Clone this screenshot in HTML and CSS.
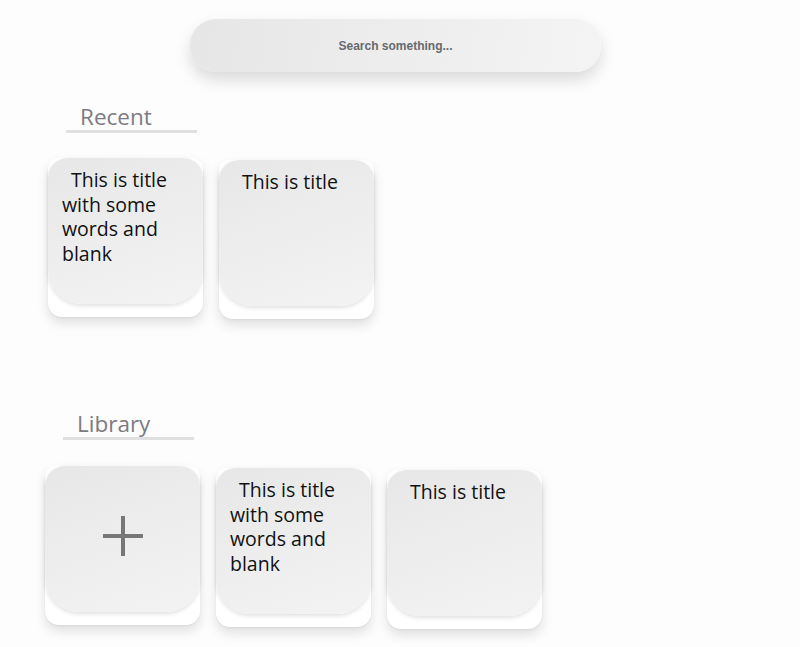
FILE: index.html
```html
<!DOCTYPE html>
<html lang="en">
<head>
<meta charset="utf-8">
<title>Notes</title>
<link rel="stylesheet" href="styles.css">
</head>
<body>
  <header class="top">
    <div class="search">Search something...</div>
  </header>

  <section class="shelf shelf-recent">
    <h2 class="shelf-title">Recent</h2>
    <div class="cards">
      <div class="card"><div class="card-face"><p class="card-text">This is title with some words and blank</p></div></div>
      <div class="card"><div class="card-face"><p class="card-text">This is title</p></div></div>
    </div>
  </section>

  <section class="shelf shelf-library">
    <h2 class="shelf-title">Library</h2>
    <div class="cards">
      <div class="card card-add">
        <div class="card-face">
          <svg class="plus" width="44" height="44" viewBox="0 0 44 44" aria-hidden="true">
            <path d="M22 2v40M2 22h40" stroke="#777" stroke-width="4" fill="none"/>
          </svg>
        </div>
      </div>
      <div class="card"><div class="card-face"><p class="card-text">This is title with some words and blank</p></div></div>
      <div class="card"><div class="card-face"><p class="card-text">This is title</p></div></div>
    </div>
  </section>
</body>
</html>
```

FILE: styles.css
```css
* { box-sizing: border-box; }

html, body {
  margin: 0;
  background: #fdfdfd;
}

body {
  width: 800px;
  height: 647px;
  overflow: hidden;
  font-family: "Open Sans", "Noto Sans", sans-serif;
}

.top {
  padding: 19px 0 0 190px;
}

.search {
  width: 411px;
  height: 53px;
  border-radius: 26px;
  background: linear-gradient(100deg, #e6e6e6 0%, #ededed 50%, #f4f4f4 100%);
  box-shadow: 0 8px 16px rgba(0, 0, 0, 0.14);
  display: flex;
  align-items: center;
  justify-content: center;
  font-family: "Liberation Sans", Arial, sans-serif;
  font-weight: bold;
  font-size: 12px;
  color: #666a70;
}

/* section heading with a short rule under it */
.shelf-title {
  margin: 0 0 0 18px;
  padding-left: 14px;
  font-weight: normal;
  font-size: 22.5px;
  line-height: 24px;
  color: #7c7a82;
}

.shelf-title::after {
  content: "";
  display: block;
  height: 3px;
  width: 131px;
  margin-left: -14px;
  margin-top: 1px;
  background: #e0e0e0;
}

.shelf-recent {
  padding: 33px 0 0 48px;
}

.shelf-recent .cards {
  margin-top: 25px;
}

.shelf-library {
  padding: 93px 0 0 45px;
}

.shelf-library .cards {
  margin-top: 26px;
}

.cards {
  display: flex;
  align-items: flex-start;
  gap: 16px;
}

.card:nth-child(2) { margin-top: 2px; }
.card:nth-child(3) { margin-top: 4px; }

.card {
  width: 155px;
  height: 159px;
  background: #ffffff;
  border-radius: 10px 10px 14px 14px;
  box-shadow: 0 6px 12px rgba(0, 0, 0, 0.12), 0 1px 2px rgba(0, 0, 0, 0.05);
}

.card-face {
  height: 146px;
  border-radius: 20px 20px 34px 34px;
  background: linear-gradient(160deg, #e7e7e7 0%, #eeeeee 55%, #f3f3f3 100%);
  box-shadow: 0 2px 4px rgba(0, 0, 0, 0.12);
  padding: 10px 14px 0 14px;
}

.card-text {
  margin: 0;
  font-size: 19.5px;
  line-height: 24.5px;
  color: #111;
  text-indent: 9px;
}

.card-add .card-face {
  display: flex;
  align-items: center;
  justify-content: center;
}

.plus {
  display: block;
  margin-top: -17px;
}
```
